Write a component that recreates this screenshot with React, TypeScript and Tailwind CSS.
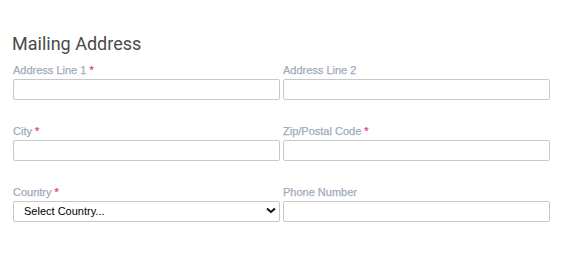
import React from "react";

function Label({ text, required }: { text: string; required?: boolean }) {
  return (
    <label
      className="block h-[18px] pt-[2px] text-[11px] leading-[14px] text-[#9eabbb] font-['Liberation_Sans',Arial,sans-serif]"
      style={{ WebkitTextStroke: "0.25px #9eabbb" }}
    >
      {text}
      {required && (
        <span className="ml-[3px] text-[#e8427c]" style={{ WebkitTextStroke: "0.25px #e8427c" }}>
          *
        </span>
      )}
    </label>
  );
}

function Field({ label, required }: { label: string; required?: boolean }) {
  return (
    <div className="flex flex-col">
      <Label text={label} required={required} />
      <input className="h-[21px] w-full border border-[#c8c8c8] rounded-[2px] bg-white outline-none" />
    </div>
  );
}

export default function App() {
  return (
    <div className="w-[564px] h-[254px] bg-white pl-[13px] pt-[32px] font-['Liberation_Sans',Arial,sans-serif]">
      <h2 className="ml-[-1px] text-[18px] leading-[24px] text-[#4a4a4a] font-['Roboto',sans-serif] mb-[5px]">
        Mailing Address
      </h2>
      <div className="grid grid-cols-[267px_267px] gap-x-[3px] gap-y-[22px]">
        <Field label="Address Line 1" required />
        <Field label="Address Line 2" />
        <Field label="City" required />
        <Field label="Zip/Postal Code" required />
        <div className="flex flex-col">
          <Label text="Country" required />
          <div className="relative h-[21px] border border-[#c8c8c8] rounded-[2px] bg-white flex items-center pl-[10px]">
            <span className="text-[11px] text-black">Select Country...</span>
            <svg className="absolute right-[3px] top-[5px]" width="10" height="8" viewBox="0 0 10 8">
              <path d="M1 1.5 L5 5 L9 1.5" fill="none" stroke="#111" strokeWidth="2" />
            </svg>
          </div>
        </div>
        <Field label="Phone Number" />
      </div>
    </div>
  );
}
